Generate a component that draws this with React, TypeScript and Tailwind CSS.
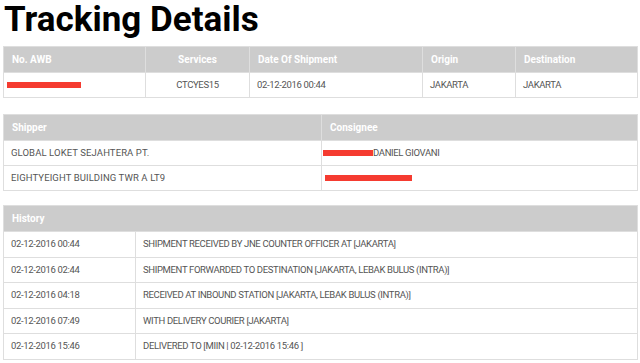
import React from "react";

const font = { fontFamily: "Roboto, 'Liberation Sans', sans-serif" };

function Redact({ w }: { w: number }) {
  return <span className="inline-block h-[6px] bg-[#f53b30] align-middle" style={{ width: w }} />;
}

const history: [string, string][] = [
  ["02-12-2016 00:44", "SHIPMENT RECEIVED BY JNE COUNTER OFFICER AT [JAKARTA]"],
  ["02-12-2016 02:44", "SHIPMENT FORWARDED TO DESTINATION [JAKARTA, LEBAK BULUS (INTRA)]"],
  ["02-12-2016 04:18", "RECEIVED AT INBOUND STATION [JAKARTA, LEBAK BULUS (INTRA)]"],
  ["02-12-2016 07:49", "WITH DELIVERY COURIER [JAKARTA]"],
  ["02-12-2016 15:46", "DELIVERED TO [MIIN | 02-12-2016 15:46 ]"],
];

const thBase = "h-[26px] px-[8px] text-[10px] font-bold text-white border border-[#dedede] bg-[#cccccc]";
const th = `${thBase} text-left`;
const thC = `${thBase} text-center`;
const tdBase =
  "h-[25px] text-[9.5px] tracking-[-0.35px] text-[#555] border border-[#dedede] bg-white whitespace-nowrap";
const td = `${tdBase} px-[7px] text-left`;
const tdC = `${tdBase} px-[7px] text-center`;
const tdWide =
  "h-[25px] px-[7px] text-left text-[9.5px] tracking-[0.1px] text-[#555] border border-[#dedede] bg-white whitespace-nowrap";

export default function App() {
  return (
    <div className="w-[640px] h-[363px] bg-white px-[3px] overflow-hidden" style={font}>
      <h1 className="text-[35px] font-bold leading-[40px] text-black h-[46px] pl-[1px]">
        Tracking Details
      </h1>

      <table className="w-[634px] table-fixed border-collapse">
        <colgroup>
          <col className="w-[142px]" />
          <col className="w-[104px]" />
          <col className="w-[173px]" />
          <col className="w-[93px]" />
          <col className="w-[122px]" />
        </colgroup>
        <thead>
          <tr>
            <th className={th}>No. AWB</th>
            <th className={thC}>Services</th>
            <th className={th}>Date Of Shipment</th>
            <th className={th}>Origin</th>
            <th className={th}>Destination</th>
          </tr>
        </thead>
        <tbody>
          <tr>
            <td className={`${tdBase} px-[3px]`}>
              <Redact w={74} />
            </td>
            <td className={tdC}>CTCYES15</td>
            <td className={td}>02-12-2016 00:44</td>
            <td className={td}>JAKARTA</td>
            <td className={td}>JAKARTA</td>
          </tr>
        </tbody>
      </table>

      <table className="w-[634px] table-fixed border-collapse mt-[16px]">
        <colgroup>
          <col className="w-[318px]" />
          <col className="w-[316px]" />
        </colgroup>
        <thead>
          <tr>
            <th className={th}>Shipper</th>
            <th className={th}>Consignee</th>
          </tr>
        </thead>
        <tbody>
          <tr>
            <td className={tdWide}>GLOBAL LOKET SEJAHTERA PT.</td>
            <td className={`${tdBase} px-[1px]`}>
              <span className="inline-flex items-center">
                <Redact w={50} />
                <span>DANIEL GIOVANI</span>
              </span>
            </td>
          </tr>
          <tr>
            <td className={tdWide}>EIGHTYEIGHT BUILDING TWR A LT9</td>
            <td className={`${tdBase} px-[3px]`}>
              <Redact w={87} />
            </td>
          </tr>
        </tbody>
      </table>

      <table className="w-[634px] table-fixed border-collapse mt-[14px]">
        <colgroup>
          <col className="w-[132px]" />
          <col className="w-[502px]" />
        </colgroup>
        <thead>
          <tr>
            <th className={th} colSpan={2}>History</th>
          </tr>
        </thead>
        <tbody>
          {history.map(([d, s]) => (
            <tr key={d} className="h-[25.5px]">
              <td className={td}>{d}</td>
              <td className={td}>{s}</td>
            </tr>
          ))}
        </tbody>
      </table>
    </div>
  );
}
